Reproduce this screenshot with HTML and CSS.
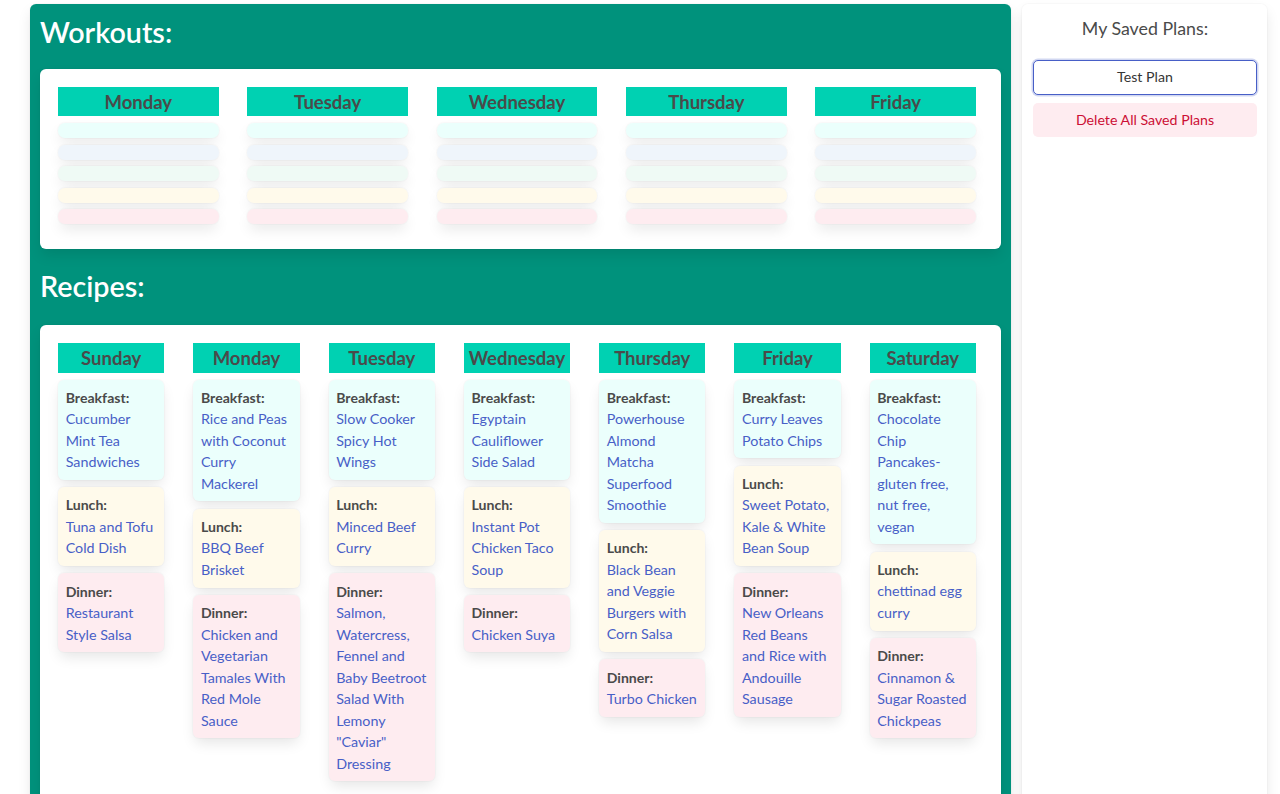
FILE: index.html
```html
<!DOCTYPE html>
<html lang="en">
<head>
<meta charset="utf-8">
<title>Meal &amp; Workout Planner</title>
<link rel="stylesheet" href="styles.css">
</head>
<body>
<div class="page">
  <main class="planner">
    <h2 class="section-title title-workouts">Workouts:</h2>
    <section class="box workouts">
      <div class="wcol">
        <div class="day-head">Monday</div>
        <div class="pill pill-primary"></div>
        <div class="pill pill-info"></div>
        <div class="pill pill-success"></div>
        <div class="pill pill-warning"></div>
        <div class="pill pill-danger"></div>
      </div>
      <div class="wcol">
        <div class="day-head">Tuesday</div>
        <div class="pill pill-primary"></div>
        <div class="pill pill-info"></div>
        <div class="pill pill-success"></div>
        <div class="pill pill-warning"></div>
        <div class="pill pill-danger"></div>
      </div>
      <div class="wcol">
        <div class="day-head">Wednesday</div>
        <div class="pill pill-primary"></div>
        <div class="pill pill-info"></div>
        <div class="pill pill-success"></div>
        <div class="pill pill-warning"></div>
        <div class="pill pill-danger"></div>
      </div>
      <div class="wcol">
        <div class="day-head">Thursday</div>
        <div class="pill pill-primary"></div>
        <div class="pill pill-info"></div>
        <div class="pill pill-success"></div>
        <div class="pill pill-warning"></div>
        <div class="pill pill-danger"></div>
      </div>
      <div class="wcol">
        <div class="day-head">Friday</div>
        <div class="pill pill-primary"></div>
        <div class="pill pill-info"></div>
        <div class="pill pill-success"></div>
        <div class="pill pill-warning"></div>
        <div class="pill pill-danger"></div>
      </div>
    </section>

    <h2 class="section-title title-recipes">Recipes:</h2>
    <section class="box recipes">
      <div class="rcol">
        <div class="day-head">Sunday</div>
        <div class="meal meal-breakfast"><strong class="meal-label">Breakfast:</strong><a class="meal-link" href="#">Cucumber Mint Tea Sandwiches</a></div>
        <div class="meal meal-lunch"><strong class="meal-label">Lunch:</strong><a class="meal-link" href="#">Tuna and Tofu Cold Dish</a></div>
        <div class="meal meal-dinner"><strong class="meal-label">Dinner:</strong><a class="meal-link" href="#">Restaurant Style Salsa</a></div>
      </div>
      <div class="rcol">
        <div class="day-head">Monday</div>
        <div class="meal meal-breakfast"><strong class="meal-label">Breakfast:</strong><a class="meal-link" href="#">Rice and Peas with Coconut Curry Mackerel</a></div>
        <div class="meal meal-lunch"><strong class="meal-label">Lunch:</strong><a class="meal-link" href="#">BBQ Beef Brisket</a></div>
        <div class="meal meal-dinner"><strong class="meal-label">Dinner:</strong><a class="meal-link" href="#">Chicken and Vegetarian Tamales With Red Mole Sauce</a></div>
      </div>
      <div class="rcol">
        <div class="day-head">Tuesday</div>
        <div class="meal meal-breakfast"><strong class="meal-label">Breakfast:</strong><a class="meal-link" href="#">Slow Cooker Spicy Hot Wings</a></div>
        <div class="meal meal-lunch"><strong class="meal-label">Lunch:</strong><a class="meal-link" href="#">Minced Beef Curry</a></div>
        <div class="meal meal-dinner"><strong class="meal-label">Dinner:</strong><a class="meal-link" href="#">Salmon, Watercress, Fennel and Baby Beetroot Salad With Lemony "Caviar" Dressing</a></div>
      </div>
      <div class="rcol">
        <div class="day-head">Wednesday</div>
        <div class="meal meal-breakfast"><strong class="meal-label">Breakfast:</strong><a class="meal-link" href="#">Egyptain Cauliflower Side Salad</a></div>
        <div class="meal meal-lunch"><strong class="meal-label">Lunch:</strong><a class="meal-link" href="#">Instant Pot Chicken Taco Soup</a></div>
        <div class="meal meal-dinner"><strong class="meal-label">Dinner:</strong><a class="meal-link" href="#">Chicken Suya</a></div>
      </div>
      <div class="rcol">
        <div class="day-head">Thursday</div>
        <div class="meal meal-breakfast"><strong class="meal-label">Breakfast:</strong><a class="meal-link" href="#">Powerhouse Almond Matcha Superfood Smoothie</a></div>
        <div class="meal meal-lunch"><strong class="meal-label">Lunch:</strong><a class="meal-link" href="#">Black Bean and Veggie Burgers with Corn Salsa</a></div>
        <div class="meal meal-dinner"><strong class="meal-label">Dinner:</strong><a class="meal-link" href="#">Turbo Chicken</a></div>
      </div>
      <div class="rcol">
        <div class="day-head">Friday</div>
        <div class="meal meal-breakfast"><strong class="meal-label">Breakfast:</strong><a class="meal-link" href="#">Curry Leaves Potato Chips</a></div>
        <div class="meal meal-lunch"><strong class="meal-label">Lunch:</strong><a class="meal-link" href="#">Sweet Potato, Kale &amp; White Bean Soup</a></div>
        <div class="meal meal-dinner"><strong class="meal-label">Dinner:</strong><a class="meal-link" href="#">New Orleans Red Beans and Rice with Andouille Sausage</a></div>
      </div>
      <div class="rcol">
        <div class="day-head">Saturday</div>
        <div class="meal meal-breakfast"><strong class="meal-label">Breakfast:</strong><a class="meal-link" href="#">Chocolate Chip Pancakes-gluten free, nut free, vegan</a></div>
        <div class="meal meal-lunch"><strong class="meal-label">Lunch:</strong><a class="meal-link" href="#">chettinad egg curry</a></div>
        <div class="meal meal-dinner"><strong class="meal-label">Dinner:</strong><a class="meal-link" href="#">Cinnamon &amp; Sugar Roasted Chickpeas</a></div>
      </div>
    </section>
  </main>

  <aside class="saved">
    <h3 class="saved-title">My Saved Plans:</h3>
    <button class="btn btn-plan" type="button">Test Plan</button>
    <button class="btn btn-delete" type="button">Delete All Saved Plans</button>
  </aside>
</div>
</body>
</html>
```
FILE: styles.css
```css
* { box-sizing: border-box; }

html, body {
  margin: 0;
  background: #ffffff;
}

body {
  font-family: Lato, "Liberation Sans", sans-serif;
  color: #4a4a4a;
  font-size: 14.3px;
  line-height: 21.5px;
}

.page {
  display: flex;
  align-items: stretch;
  gap: 11px;
  padding: 4px 13px 0 30px;
  min-height: 100vh;
}

.planner {
  flex: 1 1 auto;
  min-width: 0;
  background: #00927c;
  border-radius: 6px 6px 0 0;
  padding: 8px 10px 0 10px;
  box-shadow: 0 0.5em 1em -0.125em rgba(10, 10, 10, 0.1), 0 0 0 1px rgba(10, 10, 10, 0.02);
}

.section-title {
  margin: 0;
  color: #ffffff;
  font-size: 28.7px;
  font-weight: 600;
  line-height: 40px;
}

.title-workouts { margin-bottom: 17px; }
.title-recipes { margin-top: 17px; margin-bottom: 19px; }

.box {
  background: #ffffff;
  border-radius: 6px;
  box-shadow: 0 0.5em 1em -0.125em rgba(10, 10, 10, 0.1), 0 0 0 1px rgba(10, 10, 10, 0.02);
}

.workouts {
  display: grid;
  grid-template-columns: repeat(5, 1fr);
  column-gap: 28.8px;
  padding: 18px 25px 24.7px 18px;
}

.recipes {
  display: grid;
  grid-template-columns: repeat(7, 1fr);
  column-gap: 28.8px;
  align-items: start;
  padding: 18px 25px 40px 18px;
}

.day-head {
  background: #00d1b2;
  color: #4a4a4a;
  font-weight: 700;
  font-size: 18.5px;
  text-align: center;
  line-height: 28.4px;
  padding-top: 1px;
  white-space: nowrap;
}

.wcol {
  display: flex;
  flex-direction: column;
  gap: 6.5px;
}

.wcol .day-head { margin-bottom: 0.5px; }

.pill {
  height: 15px;
  border-radius: 7px;
  box-shadow: 0 7px 14px -2px rgba(10, 10, 10, 0.1), 0 0 0 1px rgba(10, 10, 10, 0.02);
}

.pill-primary, .meal-breakfast { background: #ebfffc; }
.pill-info { background: #eff5fb; }
.pill-success { background: #effaf5; }
.pill-warning, .meal-lunch { background: #fffaeb; }
.pill-danger, .meal-dinner { background: #feecf0; }

.rcol {
  display: flex;
  flex-direction: column;
  gap: 7.3px;
}

.rcol .day-head { margin-bottom: -0.3px; }

.meal {
  border-radius: 6px;
  padding: 7.2px 7.4px 7.2px 7.7px;
  box-shadow: 0 7px 14px -2px rgba(10, 10, 10, 0.1), 0 0 0 1px rgba(10, 10, 10, 0.02);
}

.meal-label {
  display: block;
  font-weight: 700;
  font-size: 14.1px;
  color: #4a4a4a;
}

.meal-link {
  color: #485fc7;
  text-decoration: none;
}

.saved {
  flex: 0 0 245px;
  background: #ffffff;
  border-radius: 6px 6px 0 0;
  padding: 11.5px 10px 0 11px;
  box-shadow: 0 0.5em 1em -0.125em rgba(10, 10, 10, 0.1), 0 0 0 1px rgba(10, 10, 10, 0.02);
  display: flex;
  flex-direction: column;
}

.saved-title {
  margin: 0 0 20px 0;
  font-size: 17.8px;
  font-weight: 400;
  line-height: 24px;
  text-align: center;
  color: #4a4a4a;
}

.btn {
  font-family: Lato, "Liberation Sans", sans-serif;
  font-size: 14.2px;
  line-height: 20px;
  border-radius: 5px;
  text-align: center;
  cursor: pointer;
  width: 100%;
}

.btn-plan {
  height: 35.7px;
  background: #ffffff;
  color: #363636;
  border: 1px solid #485fc7;
  box-shadow: 0 0 0 1.5px rgba(72, 95, 199, 0.25);
}

.btn-delete {
  margin-top: 7.7px;
  height: 34.6px;
  background: #feecf0;
  color: #cc0f35;
  border: 1px solid transparent;
}
```
